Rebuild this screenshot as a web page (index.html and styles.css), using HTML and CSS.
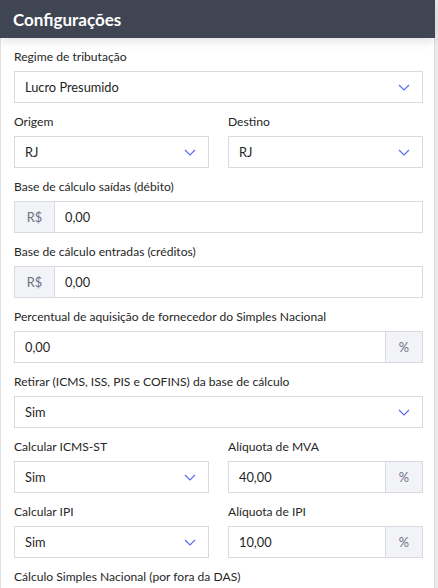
FILE: index.html
```html
<!DOCTYPE html>
<html lang="pt-BR">
<head>
<meta charset="utf-8">
<title>Configurações</title>
<link rel="stylesheet" href="styles.css">
</head>
<body>
<div class="card">
  <div class="card-header"><h1 class="title">Configurações</h1></div>
  <div class="card-body">
    <div class="field">
      <label class="label">Regime de tributação</label>
      <div class="select"><span class="value">Lucro Presumido</span><svg class="chev" viewBox="0 0 12 7"><path d="M1 1l5 5 5-5"/></svg></div>
    </div>
    <div class="row">
      <div class="field">
        <label class="label">Origem</label>
        <div class="select"><span class="value">RJ</span><svg class="chev" viewBox="0 0 12 7"><path d="M1 1l5 5 5-5"/></svg></div>
      </div>
      <div class="field">
        <label class="label">Destino</label>
        <div class="select"><span class="value">RJ</span><svg class="chev" viewBox="0 0 12 7"><path d="M1 1l5 5 5-5"/></svg></div>
      </div>
    </div>
    <div class="field">
      <label class="label">Base de cálculo saídas (débito)</label>
      <div class="group"><span class="addon addon-left">R$</span><span class="input">0,00</span></div>
    </div>
    <div class="field">
      <label class="label">Base de cálculo entradas (créditos)</label>
      <div class="group"><span class="addon addon-left">R$</span><span class="input">0,00</span></div>
    </div>
    <div class="field">
      <label class="label">Percentual de aquisição de fornecedor do Simples Nacional</label>
      <div class="group"><span class="input">0,00</span><span class="addon addon-right">%</span></div>
    </div>
    <div class="field">
      <label class="label">Retirar (ICMS, ISS, PIS e COFINS) da base de cálculo</label>
      <div class="select"><span class="value">Sim</span><svg class="chev" viewBox="0 0 12 7"><path d="M1 1l5 5 5-5"/></svg></div>
    </div>
    <div class="row">
      <div class="field">
        <label class="label">Calcular ICMS-ST</label>
        <div class="select"><span class="value">Sim</span><svg class="chev" viewBox="0 0 12 7"><path d="M1 1l5 5 5-5"/></svg></div>
      </div>
      <div class="field">
        <label class="label">Alíquota de MVA</label>
        <div class="group"><span class="input">40,00</span><span class="addon addon-right">%</span></div>
      </div>
    </div>
    <div class="row">
      <div class="field">
        <label class="label">Calcular IPI</label>
        <div class="select"><span class="value">Sim</span><svg class="chev" viewBox="0 0 12 7"><path d="M1 1l5 5 5-5"/></svg></div>
      </div>
      <div class="field">
        <label class="label">Alíquota de IPI</label>
        <div class="group"><span class="input">10,00</span><span class="addon addon-right">%</span></div>
      </div>
    </div>
    <div class="field">
      <label class="label">Cálculo Simples Nacional (por fora da DAS)</label>
      <div class="select"><span class="value">Não</span><svg class="chev" viewBox="0 0 12 7"><path d="M1 1l5 5 5-5"/></svg></div>
    </div>
  </div>
</div>
</body>
</html>
```

FILE: styles.css
```css
* { box-sizing: border-box; }
html, body { margin: 0; padding: 0; }
body {
  background: #ebebeb;
  font-family: "Lato", "Noto Sans", sans-serif;
  color: #2b2b2b;
  height: 588px;
  overflow: hidden;
}
.card {
  width: 435px;
  background: #fff;
  border-left: 1px solid #e3e3e3;
  border-right: 1px solid #dcdcdc;
  min-height: 588px;
}
.card-header {
  background: #404553;
  height: 38px;
  margin-left: -1px;
  margin-right: -1px;
  padding: 0 13px;
  display: flex;
  align-items: center;
  box-shadow: 0 3px 10px rgba(0, 0, 0, 0.12);
  position: relative;
}
.title {
  margin: 0;
  color: #fff;
  font-size: 17px;
  font-weight: 700;
}
.card-body {
  padding: 10px 11px 0 13px;
  display: flex;
  flex-direction: column;
  gap: 10px;
}
.row {
  display: grid;
  grid-template-columns: 1fr 1fr;
  column-gap: 19px;
}
.field { display: flex; flex-direction: column; }
.label {
  font-size: 12.1px;
  line-height: 18px;
  margin-bottom: 5px;
  color: #262626;
}
.select, .group {
  height: 32px;
  border: 1px solid #d9d9e1;
  display: flex;
  align-items: center;
  background: #fff;
}
.select {
  padding: 0 12px 0 10px;
  justify-content: space-between;
}
.value, .input {
  font-size: 12.8px;
  color: #1f1f1f;
}
.chev {
  width: 12px;
  height: 7px;
  fill: none;
  stroke: #5b6cf2;
  stroke-width: 1.2;
}
.group .input {
  flex: 1;
  padding: 0 10px;
}
.addon {
  align-self: stretch;
  display: flex;
  align-items: center;
  justify-content: center;
  background: #f2f3f6;
  color: #6b7083;
  font-size: 12.8px;
}
.addon-left { width: 40px; border-right: 1px solid #d9d9e1; }
.addon-right { width: 37px; border-left: 1px solid #d9d9e1; }
```
